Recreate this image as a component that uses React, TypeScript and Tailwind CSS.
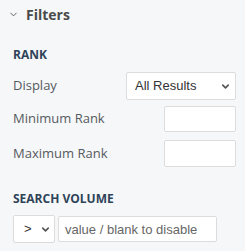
import { ChevronDown } from "lucide-react";

const label = "text-[13px] text-[#555a60]";
const field =
  "h-[26px] rounded-[2px] border border-[#dcdcdc] bg-white outline-none text-[13px] text-[#333] px-2";

function Row({ name, children }: { name: string; children: React.ReactNode }) {
  return (
    <div className="flex items-center justify-between">
      <span className={label}>{name}</span>
      {children}
    </div>
  );
}

export default function App() {
  return (
    <div
      className="w-[245px] h-[251px] bg-[#f6f7f9] overflow-hidden"
      style={{ fontFamily: '"Open Sans", sans-serif' }}
    >
      <div className="h-[28px] flex items-center pl-[8px] gap-[7px]">
        <ChevronDown size={11} strokeWidth={2} className="text-[#555]" />
        <span className="text-[14px] font-bold text-[#4a4a4a]">Filters</span>
      </div>

      <div className="pl-[13px] pr-[9px]">
        <div className="mt-[18px] text-[12px] font-bold text-[#2e4358]">RANK</div>

        <div className="mt-[8px] flex flex-col gap-[6px]">
          <Row name="Display">
            <div className="relative">
              <select
                className={`${field} h-[28px] w-[110px] appearance-none pr-6`}
                style={{ fontFamily: '"Liberation Sans", Arial, sans-serif' }}
                defaultValue="all"
              >
                <option value="all">All Results</option>
              </select>
              <ChevronDown
                size={11}
                strokeWidth={3.5}
                className="absolute right-[5px] top-[9px] text-[#555] pointer-events-none"
              />
            </div>
          </Row>
          <Row name="Minimum Rank">
            <input className={`${field} w-[72px]`} />
          </Row>
          <div className="mt-[2px]">
            <Row name="Maximum Rank">
              <input className={`${field} h-[27px] w-[72px]`} />
            </Row>
          </div>
        </div>

        <div className="mt-[23px] text-[12px] font-bold text-[#2e4358]">SEARCH VOLUME</div>

        <div
          className="mt-[7px] flex items-center gap-[3px]"
          style={{ fontFamily: '"Liberation Sans", Arial, sans-serif' }}
        >
          <div className="relative">
            <select
              className={`${field} h-[28px] w-[42px] appearance-none pl-[10px] text-[13px]`}
              defaultValue="gt"
            >
              <option value="gt">&gt;</option>
            </select>
            <ChevronDown
              size={11}
              strokeWidth={3.5}
              className="absolute right-[4px] top-[9px] text-[#555] pointer-events-none"
            />
          </div>
          <input
            className={`${field} w-[159px] placeholder:text-[#666] px-[6px]`}
            placeholder="value / blank to disable"
          />
        </div>
      </div>
    </div>
  );
}
